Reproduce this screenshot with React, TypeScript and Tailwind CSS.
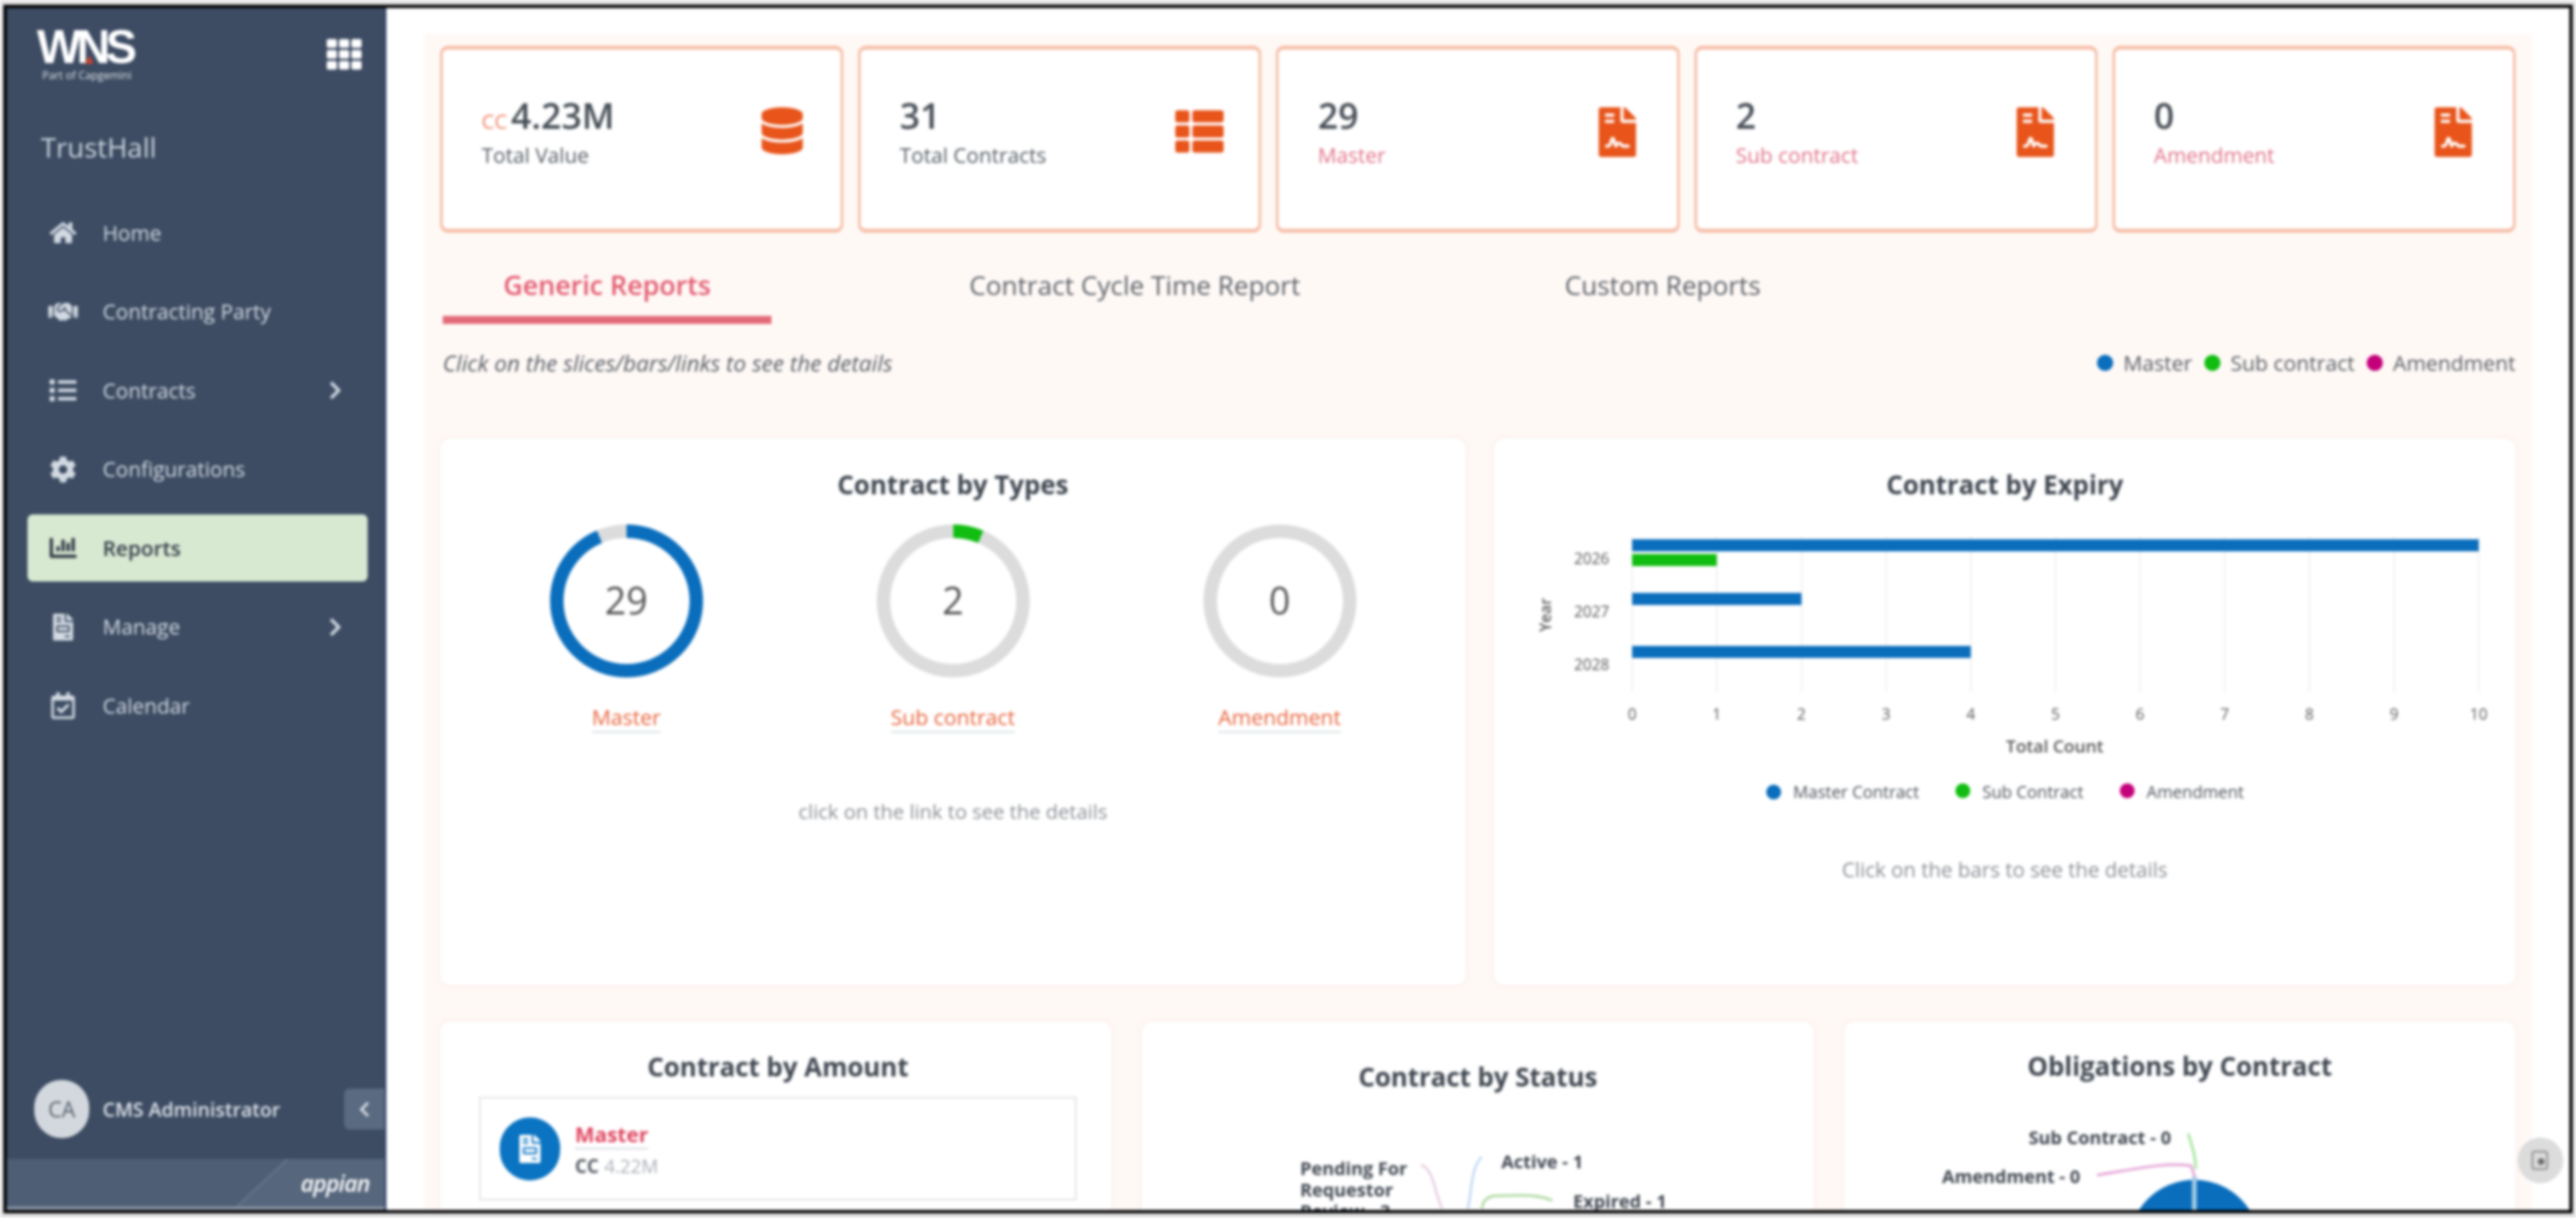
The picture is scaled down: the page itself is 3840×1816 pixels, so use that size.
import {
  FaChartBar,
  FaChevronLeft,
  FaChevronRight,
  FaCog,
  FaDatabase,
  FaFileContract,
  FaFileInvoice,
  FaHandshake,
  FaHome,
  FaList,
  FaRegCalendarCheck,
  FaTh,
  FaThList,
} from "react-icons/fa";

const navItems = [
  { label: "Home", icon: <FaHome size={40} /> },
  { label: "Contracting Party", icon: <FaHandshake size={44} /> },
  { label: "Contracts", icon: <FaList size={40} />, arrow: true },
  { label: "Configurations", icon: <FaCog size={40} /> },
  { label: "Reports", icon: <FaChartBar size={40} />, active: true },
  { label: "Manage", icon: <FaFileInvoice size={40} />, arrow: true },
  { label: "Calendar", icon: <FaRegCalendarCheck size={40} /> },
];

function Sidebar() {
  return (
    <aside className="w-[566px] shrink-0 flex flex-col bg-[#3d4c63] border-r-[3px] border-[#33466a]">
      <div className="flex items-start justify-between pl-[45px] pr-[34px] pt-[31px]">
        <div className="w-[140px]">
          <div className="relative text-[70px] leading-[54px] font-bold tracking-[-7px] text-white font-['Liberation_Sans',sans-serif]">
            WNS
            <span className="absolute left-[72px] bottom-[2px] w-0 h-0 border-l-[6px] border-r-[6px] border-b-[12px] border-l-transparent border-r-transparent border-b-[#d8402a]" />
          </div>
          <div className="mt-[6px] pl-[8px] text-[16px] leading-[18px] text-[#dfe3e8] whitespace-nowrap">
            Part of Capgemini
          </div>
        </div>
        <FaTh size={52} className="mt-[12px] text-white" />
      </div>

      <div className="mt-[76px] pl-[51px] text-[41px] leading-[44px] text-[#ccd4de]">TrustHall</div>

      <nav className="mt-[56px] ml-[31px] mr-[25px] flex flex-col gap-[17.5px]">
        {navItems.map((item) => (
          <div
            key={item.label}
            className={
              item.active
                ? "h-[100px] flex items-center pl-[31px] pr-[33px] rounded-lg bg-[#d8e9d2] text-[#333c48] font-semibold"
                : "h-[100px] flex items-center pl-[31px] pr-[33px] text-[#d3dae3] font-medium"
            }
          >
            <span className="w-[44px] flex justify-center shrink-0">{item.icon}</span>
            <span className="ml-[37px] text-[31px]">{item.label}</span>
            {item.arrow && <FaChevronRight size={30} className="ml-auto text-[#d3dae3]" />}
          </div>
        ))}
      </nav>

      <div className="mt-auto flex items-center pl-[41px] mb-[31px] h-[87px]">
        <div className="w-[82px] h-[87px] rounded-full bg-[#d3d8de] flex items-center justify-center text-[32px] text-[#56606c]">
          CA
        </div>
        <span className="ml-[20px] text-[29px] font-semibold text-[#dfe4ea]">CMS Administrator</span>
        <button className="ml-auto w-[60px] h-[61px] rounded-l-lg bg-[#5a6a80] flex items-center justify-center text-[#d5dbe2]">
          <FaChevronLeft size={26} />
        </button>
      </div>

      <div className="relative h-[76px] bg-[#4e5e75] border-b-[5px] border-[#8a96a5] flex items-center justify-end pr-[22px]">
        <svg className="absolute right-0 top-0" width="220" height="71" viewBox="0 0 220 71">
          <path d="M76 0 H220 V71 H0 Z" fill="#56667c" />
          <path d="M76 0 L0 71" stroke="#6d7c90" strokeWidth="2" />
        </svg>
        <span className="relative text-[34px] leading-none font-semibold italic tracking-[-1px] text-white">appian</span>
      </div>
    </aside>
  );
}

const stats = [
  { value: "4.23M", label: "Total Value", icon: <FaDatabase size={70} />, money: true },
  { value: "31", label: "Total Contracts", icon: <FaThList size={72} /> },
  { value: "29", label: "Master", icon: <FaFileContract size={74} />, pink: true },
  { value: "2", label: "Sub contract", icon: <FaFileContract size={74} />, pink: true },
  { value: "0", label: "Amendment", icon: <FaFileContract size={74} />, pink: true },
];

function StatCard({ value, label, icon, money, pink }: { value: string; label: string; icon: React.ReactNode; money?: boolean; pink?: boolean }) {
  return (
    <div className="flex-1 h-[279px] flex items-start justify-between pl-[58px] pr-[52px] pt-[70px] bg-white rounded-xl border-x-[4px] border-y-[6px] border-[#f6bfa9]">
      <div>
        <div className="h-[56px] flex items-baseline text-[53px] leading-[56px] font-semibold text-[#454d55] whitespace-nowrap">
          {money && <span className="text-[30px] font-normal text-[#ef7f5f] mr-[6px]">CC</span>}
          {value}
        </div>
        <div className={pink ? "mt-[11px] text-[31px] leading-[40px] text-[#e0738a]" : "mt-[11px] text-[31px] leading-[40px] text-[#555c64]"}>
          {label}
        </div>
      </div>
      <div className="mt-[16px] text-[#e8541a]">{icon}</div>
    </div>
  );
}

function Donut({ value, label, color, share }: { value: string; label: string; color: string; share: number }) {
  const r = 104;
  const len = 2 * Math.PI * r;
  return (
    <div className="flex flex-col items-center">
      <div className="relative w-[228px] h-[228px]">
        <svg width="228" height="228" viewBox="0 0 228 228">
          <circle cx="114" cy="114" r={r} fill="none" stroke="#dcdcdc" strokeWidth="20" />
          <circle
            cx="114"
            cy="114"
            r={r}
            fill="none"
            stroke={color}
            strokeWidth="20"
            strokeDasharray={`${len * share} ${len}`}
            transform="rotate(-90 114 114)"
          />
        </svg>
        <span className="absolute inset-0 flex items-center justify-center text-[56px] text-[#555555] -translate-y-[2px]">{value}</span>
      </div>
      <span className="mt-[38px] text-[31.5px] leading-[42px] text-[#e8633c] border-b-[3px] border-[#dfe5e8]">{label}</span>
    </div>
  );
}

function ExpiryChart() {
  const ticks = [0, 1, 2, 3, 4, 5, 6, 7, 8, 9, 10];
  const x = (n: number) => 206 + n * 126.2;
  return (
    <svg className="block" width="1523" height="340" viewBox="0 0 1523 340">
      {ticks.map((t) => (
        <line key={t} x1={x(t)} y1="9" x2={x(t)} y2="242" stroke="#eeeeee" strokeWidth="2" />
      ))}
      <rect x={x(0)} y="14" width={x(10) - x(0)} height="18" fill="#0a6ebd" />
      <rect x={x(0)} y="36" width={x(1) - x(0)} height="18" fill="#10bd10" />
      <rect x={x(0)} y="94" width={x(2) - x(0)} height="18" fill="#0a6ebd" />
      <rect x={x(0)} y="173" width={x(4) - x(0)} height="18" fill="#0a6ebd" />
      {["2026", "2027", "2028"].map((year, i) => (
        <text key={year} x="172" y={51 + i * 79} textAnchor="end" fontSize="23" fill="#555555">
          {year}
        </text>
      ))}
      <text x="85" y="127" textAnchor="middle" fontSize="23" fontWeight="600" fill="#555555" transform="rotate(-90 85 127)">
        Year
      </text>
      {ticks.map((t) => (
        <text key={t} x={x(t)} y="283" textAnchor="middle" fontSize="23" fill="#555555">
          {t}
        </text>
      ))}
      <text x="836" y="332" textAnchor="middle" fontSize="26" fontWeight="600" fill="#555555">
        Total Count
      </text>
    </svg>
  );
}

function StatusChart() {
  return (
    <svg className="block" width="996" height="200" viewBox="0 0 996 200" fontWeight="700" fill="#3f4650" fontSize="27">
      <text x="536" y="112">Active - 1</text>
      <text x="236" y="122">Pending For</text>
      <text x="236" y="154">Requestor</text>
      <text x="236" y="186">Review - 3</text>
      <text x="643" y="171">Expired - 1</text>
      <path d="M416 107 C436 112 436 150 448 172" fill="none" stroke="#e3c6de" strokeWidth="3" />
      <path d="M507 95 C490 110 492 150 486 172" fill="none" stroke="#b5d2f0" strokeWidth="3" />
      <path d="M612 160 C590 150 560 152 525 153 C510 156 508 165 507 172" fill="none" stroke="#b4dca8" strokeWidth="4" />
    </svg>
  );
}

function ObligationChart() {
  return (
    <svg className="block" width="1001" height="200" viewBox="0 0 1001 200" fontWeight="700" fill="#3f4650" fontSize="27">
      <text x="275" y="92">Sub Contract - 0</text>
      <text x="146" y="150">Amendment - 0</text>
      <path d="M513 76 C520 100 524 110 524 129" fill="none" stroke="#a8e6a0" strokeWidth="4" />
      <path d="M377 138 C430 130 480 118 517 124 L524 144" fill="none" stroke="#e6a8d8" strokeWidth="4" />
      <circle cx="522" cy="243" r="98" fill="#0a6ebd" />
      <line x1="522" y1="140" x2="522" y2="200" stroke="#a5cbe4" strokeWidth="7" />
    </svg>
  );
}

function Dot({ color, size = "w-[24px] h-[24px]" }: { color: string; size?: string }) {
  return <span className={`${size} rounded-full inline-block shrink-0 ${color}`} />;
}

function Panel() {
  return (
    <div className="flex-1 flex flex-col bg-[#fff9f6] px-[24px] pt-[17px]">
      <div className="flex gap-[22px]">
        {stats.map((s) => (
          <StatCard key={s.label + s.value} {...s} />
        ))}
      </div>

      <div className="mt-[51px] flex items-start text-[39px] leading-[54px]">
        <div className="w-[490px] ml-[4px] h-[85px] border-b-[12px] border-[#e36a78] text-center text-[40px] font-semibold text-[#e2596f]">
          Generic Reports
        </div>
        <div className="ml-[295px] text-[#5a6068]">Contract Cycle Time Report</div>
        <div className="ml-[394px] text-[#5a6068]">Custom Reports</div>
      </div>

      <div className="mt-[38px] flex items-center justify-between h-[40px] pl-[4px] text-[31.5px] text-[#555c64]">
        <span className="italic text-[33.5px]">Click on the slices/bars/links to see the details</span>
        <div className="flex items-center">
          <Dot color="bg-[#0a6ebd]" />
          <span className="ml-[15px]">Master</span>
          <span className="ml-[18px]"><Dot color="bg-[#10bd10]" /></span>
          <span className="ml-[15px]">Sub contract</span>
          <span className="ml-[18px]"><Dot color="bg-[#c4007a]" /></span>
          <span className="ml-[15px]">Amendment</span>
        </div>
      </div>

      <div className="mt-[93px] flex gap-[42px] h-[815px]">
        <section className="w-[1530px] bg-white rounded-2xl shadow-[0_0_8px_rgba(240,220,210,0.5)] pt-[43px]">
          <h2 className="text-center text-[38.5px] leading-[50px] font-bold text-[#3f4650]">Contract by Types</h2>
          <div className="mt-[35px] px-[34px] grid grid-cols-3">
            <Donut value="29" label="Master" color="#0a6ebd" share={29 / 31} />
            <Donut value="2" label="Sub contract" color="#10bd10" share={2 / 31} />
            <Donut value="0" label="Amendment" color="#dcdcdc" share={0} />
          </div>
          <p className="mt-[97px] text-center text-[30px] leading-[40px] text-[#8a8f95]">click on the link to see the details</p>
        </section>

        <section className="flex-1 bg-white rounded-2xl shadow-[0_0_8px_rgba(240,220,210,0.5)] pt-[43px]">
          <h2 className="text-center text-[38.5px] leading-[50px] font-bold text-[#3f4650]">Contract by Expiry</h2>
          <div className="mt-[43px]">
            <ExpiryChart />
          </div>
          <div className="mt-[35px] h-[32px] pl-[406px] flex items-center text-[25px] text-[#4a5058]">
            <Dot color="bg-[#0a6ebd]" size="w-[22px] h-[22px]" />
            <span className="ml-[18px]">Master Contract</span>
            <span className="ml-[54px]"><Dot color="bg-[#10bd10]" size="w-[22px] h-[22px]" /></span>
            <span className="ml-[18px]">Sub Contract</span>
            <span className="ml-[54px]"><Dot color="bg-[#c4007a]" size="w-[22px] h-[22px]" /></span>
            <span className="ml-[18px]">Amendment</span>
          </div>
          <p className="mt-[79px] text-center text-[30.5px] leading-[40px] text-[#8a8f95]">Click on the bars to see the details</p>
        </section>
      </div>

      <div className="mt-[54px] grid grid-cols-3 gap-[45px] h-[400px]">
        <section className="bg-white rounded-2xl shadow-[0_0_8px_rgba(240,220,210,0.5)] pt-[42px] pl-[58px] pr-[52px]">
          <h2 className="text-center text-[38.5px] leading-[50px] font-bold text-[#3f4650]">Contract by Amount</h2>
          <div className="mt-[20px] h-[155px] border-[3px] border-[#e8e8e8] flex items-center pl-[28px]">
            <div className="w-[90px] h-[94px] rounded-full bg-[#0a73c2] flex items-center justify-center text-white">
              <FaFileInvoice size={42} />
            </div>
            <div className="ml-[22px]">
              <div className="inline-block text-[31px] leading-[40px] font-bold text-[#e0455f] border-b-[3px] border-[#dfe2e4]">Master</div>
              <div className="mt-[8px] text-[28px] leading-[32px] text-[#a9afb6]">
                <span className="font-bold text-[#555c64] mr-[8px]">CC</span>4.22M
              </div>
            </div>
          </div>
        </section>

        <section className="bg-white rounded-2xl shadow-[0_0_8px_rgba(240,220,210,0.5)] pt-[57px]">
          <h2 className="text-center text-[38.5px] leading-[50px] font-bold text-[#3f4650]">Contract by Status</h2>
          <StatusChart />
        </section>

        <section className="bg-white rounded-2xl shadow-[0_0_8px_rgba(240,220,210,0.5)] pt-[41px]">
          <h2 className="text-center text-[38.5px] leading-[50px] font-bold text-[#3f4650]">Obligations by Contract</h2>
          <ObligationChart />
        </section>
      </div>
    </div>
  );
}

export default function App() {
  return (
    <div className="relative w-[3840px] h-[1816px] overflow-hidden bg-[#e4e4e4] pt-[7px] pb-[7px] pl-[5px] pr-[5px] font-['Open_Sans',sans-serif] blur-[2px]">
      <div className="h-full flex border-[5px] border-black bg-white overflow-hidden">
        <Sidebar />
        <main className="flex-1 flex flex-col min-w-0 pt-[39px] px-[56px] overflow-hidden">
          <Panel />
        </main>
      </div>
      <button className="absolute left-[3753px] top-[1696px] w-[68px] h-[68px] rounded-full bg-[#dcdcdc] flex items-center justify-center">
        <svg width="36" height="36" viewBox="0 0 36 36" fill="none">
          <rect x="6" y="5" width="22" height="26" rx="3" stroke="#8a8a8a" strokeWidth="2.5" />
          <circle cx="19" cy="20" r="5" fill="#6a6a6a" />
        </svg>
      </button>
    </div>
  );
}
